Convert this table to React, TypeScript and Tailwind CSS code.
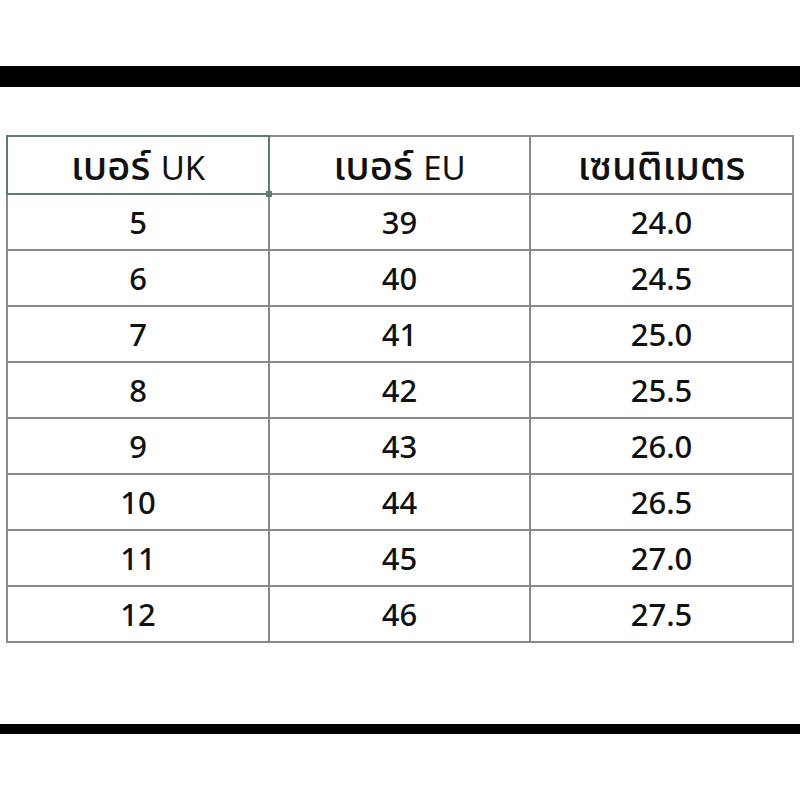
import React from "react"

const rows = [
  ["5", "39", "24.0"],
  ["6", "40", "24.5"],
  ["7", "41", "25.0"],
  ["8", "42", "25.5"],
  ["9", "43", "26.0"],
  ["10", "44", "26.5"],
  ["11", "45", "27.0"],
  ["12", "46", "27.5"],
]

export default function App() {
  return (
    <div
      className="w-[800px] h-[800px] bg-white flex flex-col text-[#111]"
      style={{ fontFamily: "'Noto Sans', 'Noto Sans Thai', Tahoma, 'DejaVu Sans', sans-serif" }}
    >
      <div className="mt-[66px] h-[21px] bg-black" />

      <div className="mt-[48px] pl-[6px]">
        <table className="border-collapse">
          <thead>
            <tr className="h-[58px]">
              <th className="w-[262px] border-2 border-[#5f7d6f] font-medium text-[40px] leading-none relative">
                เบอร์ <span className="text-[33px] font-normal">UK</span>
                <span className="absolute -right-[4px] -bottom-[4px] w-[6px] h-[6px] bg-[#5f7d6f]" />
              </th>
              <th className="w-[261px] border-2 border-[#8a8a8a] font-medium text-[40px] leading-none">
                เบอร์ <span className="text-[33px] font-normal">EU</span>
              </th>
              <th className="w-[263px] border-2 border-[#8a8a8a] font-medium text-[40px] leading-none">
                เซนติเมตร
              </th>
            </tr>
          </thead>
          <tbody>
            {rows.map((r) => (
              <tr key={r[0]} className="h-[56px]">
                {r.map((c, i) => (
                  <td key={i} className="border-2 border-[#8a8a8a] text-center text-[31px] font-medium leading-none">
                    {c}
                  </td>
                ))}
              </tr>
            ))}
          </tbody>
        </table>
      </div>

      <div className="mt-[81px] h-[10px] bg-black" />
    </div>
  )
}
